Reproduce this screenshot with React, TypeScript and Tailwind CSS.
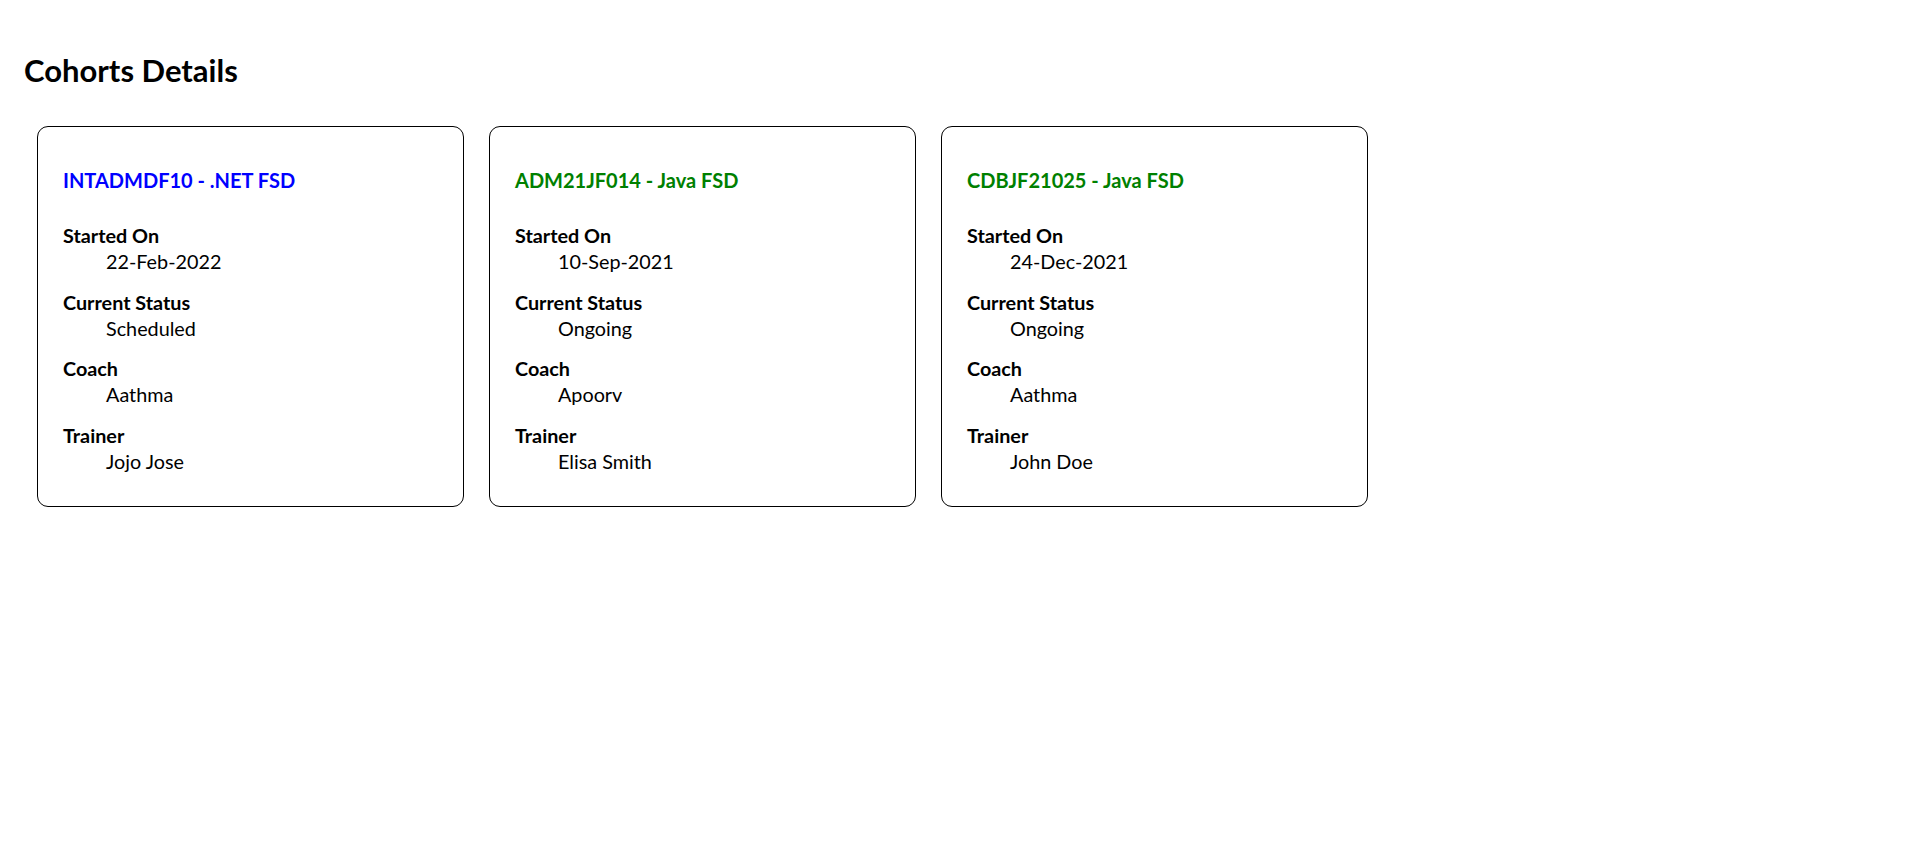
type Cohort = {
  code: string;
  technology: string;
  startedOn: string;
  status: "Scheduled" | "Ongoing";
  coach: string;
  trainer: string;
};

const cohorts: Cohort[] = [
  { code: "INTADMDF10", technology: ".NET FSD", startedOn: "22-Feb-2022", status: "Scheduled", coach: "Aathma", trainer: "Jojo Jose" },
  { code: "ADM21JF014", technology: "Java FSD", startedOn: "10-Sep-2021", status: "Ongoing", coach: "Apoorv", trainer: "Elisa Smith" },
  { code: "CDBJF21025", technology: "Java FSD", startedOn: "24-Dec-2021", status: "Ongoing", coach: "Aathma", trainer: "John Doe" },
];

export default function App() {
  return (
    <div className="min-h-screen bg-white text-black font-['Lato','Liberation_Sans',sans-serif]">
      <h2 className="pl-[24px] pt-[52px] text-[31px] font-bold leading-[36px]">Cohorts Details</h2>
      <div className="mt-[38px] flex gap-[25px] pl-[37px]">
        {cohorts.map((cohort) => (
          <CohortCard key={cohort.code} cohort={cohort} />
        ))}
      </div>
    </div>
  );
}

function CohortCard({ cohort }: { cohort: Cohort }) {
  const titleColor = cohort.status === "Ongoing" ? "text-[#008000]" : "text-[#0000ff]";

  return (
    <div className="w-[427px] rounded-[11px] border border-black pl-[25px] pr-6 pt-[40px] pb-[32px]">
      <h3 className={`text-[20px] font-bold leading-[26px] ${titleColor}`}>
        {cohort.code} - {cohort.technology}
      </h3>
      <dl className="mt-[29px] flex flex-col gap-[14.5px] text-[19.8px] leading-[26px]">
        <Detail label="Started On" value={cohort.startedOn} />
        <Detail label="Current Status" value={cohort.status} />
        <Detail label="Coach" value={cohort.coach} />
        <Detail label="Trainer" value={cohort.trainer} />
      </dl>
    </div>
  );
}

function Detail({ label, value }: { label: string; value: string }) {
  return (
    <div>
      <dt className="font-bold">{label}</dt>
      <dd className="pl-[43px]">{value}</dd>
    </div>
  );
}
